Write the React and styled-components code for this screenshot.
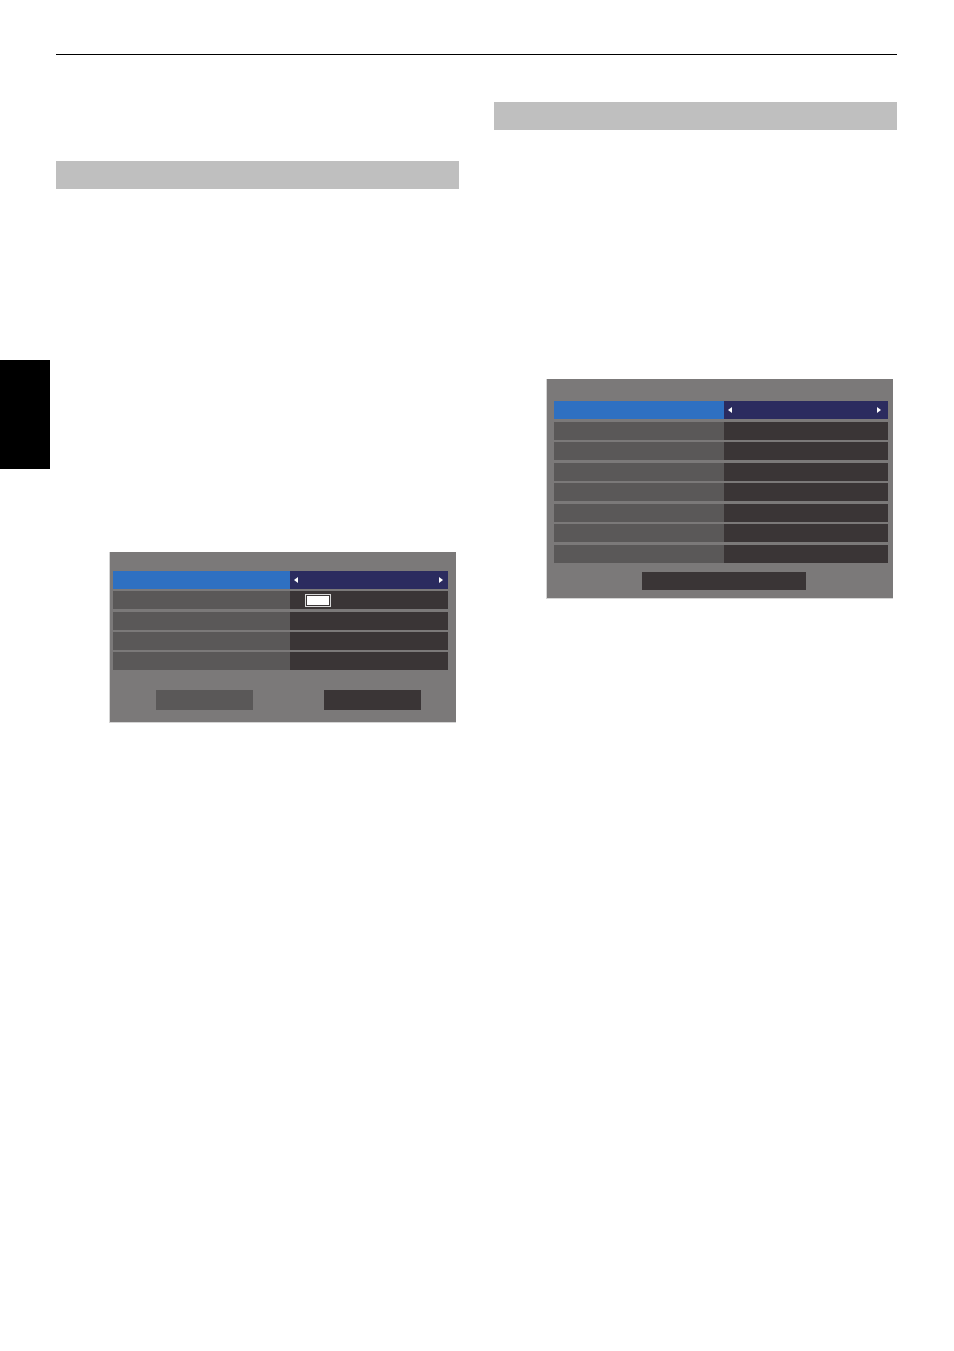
import React from 'react'
import styled, { createGlobalStyle } from 'styled-components'

const GlobalStyle = createGlobalStyle`
  html, body {
    margin: 0;
    padding: 0;
    background: #ffffff;
    font-family: "Liberation Sans", Arial, sans-serif;
  }
`

const Page = styled.div`
  width: 954px;
  height: 1351px;
  display: flex;
  background: #fff;
`

const SideRail = styled.div`
  width: 56px;
  flex-shrink: 0;
`

const Tab = styled.div`
  width: 50px;
  height: 109px;
  margin-top: 360px;
  background: #000;
`

const Main = styled.div`
  width: 841px;
  padding-top: 54px;
`

const Rule = styled.div`
  height: 1px;
  background: #000;
`

const Columns = styled.div`
  display: grid;
  grid-template-columns: 403px 403px;
  column-gap: 35px;
`

const Column = styled.div`
  display: flex;
  flex-direction: column;
  padding-top: ${p => p.$top}px;
`

const SectionBar = styled.div`
  height: 28px;
  background: #bfbfbf;
`

const Dialog = styled.div`
  width: ${p => p.$w}px;
  height: ${p => p.$h}px;
  box-sizing: border-box;
  margin-top: ${p => p.$top}px;
  margin-left: ${p => p.$left}px;
  padding: ${p => p.$pad};
  background: #7b7979;
  border-left: 1px solid #d4d4d4;
  border-bottom: 1px solid #d4d4d4;
  display: flex;
  flex-direction: column;
`

const Rows = styled.div`
  display: flex;
  flex-direction: column;
  gap: ${p => p.$gap}px;
`

const Row = styled.div`
  display: grid;
  grid-template-columns: ${p => p.$split}px 1fr;
  height: 18px;
`

const Label = styled.div`
  background: ${p => (p.$active ? '#2e70c1' : '#5a5858')};
`

const Value = styled.div`
  background: ${p => (p.$active ? '#2b2b5f' : '#3a3536')};
  display: flex;
  align-items: center;
  justify-content: space-between;
  padding: 0 ${p => p.$inset}px 0 4px;
`

const ArrowLeft = styled.span`
  width: 0;
  height: 0;
  border-top: 3px solid transparent;
  border-bottom: 3px solid transparent;
  border-right: 4px solid #fff;
`

const ArrowRight = styled.span`
  width: 0;
  height: 0;
  border-top: 3px solid transparent;
  border-bottom: 3px solid transparent;
  border-left: 4px solid #fff;
`

const Swatch = styled.span`
  margin-left: 11px;
  width: 26px;
  height: 13px;
  box-sizing: border-box;
  border: 1px solid #d8d8d8;
  padding: 1px;
  background: #3a3536;
  display: flex;

  &::after {
    content: '';
    flex: 1;
    background: #fff;
  }
`

const ButtonRow = styled.div`
  display: flex;
  margin-top: ${p => p.$top}px;
  padding-left: ${p => p.$left}px;
  gap: ${p => p.$gap}px;
`

const Button = styled.div`
  width: ${p => p.$w}px;
  height: ${p => p.$h}px;
  background: ${p => (p.$dim ? '#5a5858' : '#3a3536')};
`

const MenuRow = ({ split, inset = 4, active, children }) => (
  <Row $split={split}>
    <Label $active={active} />
    <Value $active={active} $inset={inset}>
      {active ? (
        <>
          <ArrowLeft />
          <ArrowRight />
        </>
      ) : (
        children
      )}
    </Value>
  </Row>
)

const App = () => {
  return (
    <Page>
      <GlobalStyle />
      <SideRail>
        <Tab />
      </SideRail>
      <Main>
        <Rule />
        <Columns>
          <Column $top={106}>
            <SectionBar />
            <Dialog $w={347} $h={171} $top={363} $left={53} $pad="19px 8px 0 3px">
              <Rows $gap={2.25}>
                <MenuRow split={177} inset={5} active />
                <MenuRow split={177}>
                  <Swatch />
                </MenuRow>
                <MenuRow split={177} />
                <MenuRow split={177} />
                <MenuRow split={177} />
              </Rows>
              <ButtonRow $top={20} $left={43} $gap={71}>
                <Button $w={97} $h={20} $dim />
                <Button $w={97} $h={20} />
              </ButtonRow>
            </Dialog>
          </Column>
          <Column $top={47}>
            <SectionBar />
            <Dialog $w={347} $h={220} $top={249} $left={52} $pad="22px 5px 0 7px">
              <Rows $gap={2.57}>
                <MenuRow split={170} inset={7} active />
                <MenuRow split={170} />
                <MenuRow split={170} />
                <MenuRow split={170} />
                <MenuRow split={170} />
                <MenuRow split={170} />
                <MenuRow split={170} />
                <MenuRow split={170} />
              </Rows>
              <ButtonRow $top={9} $left={88} $gap={0}>
                <Button $w={164} $h={18} />
              </ButtonRow>
            </Dialog>
          </Column>
        </Columns>
      </Main>
    </Page>
  )
}

export default App
